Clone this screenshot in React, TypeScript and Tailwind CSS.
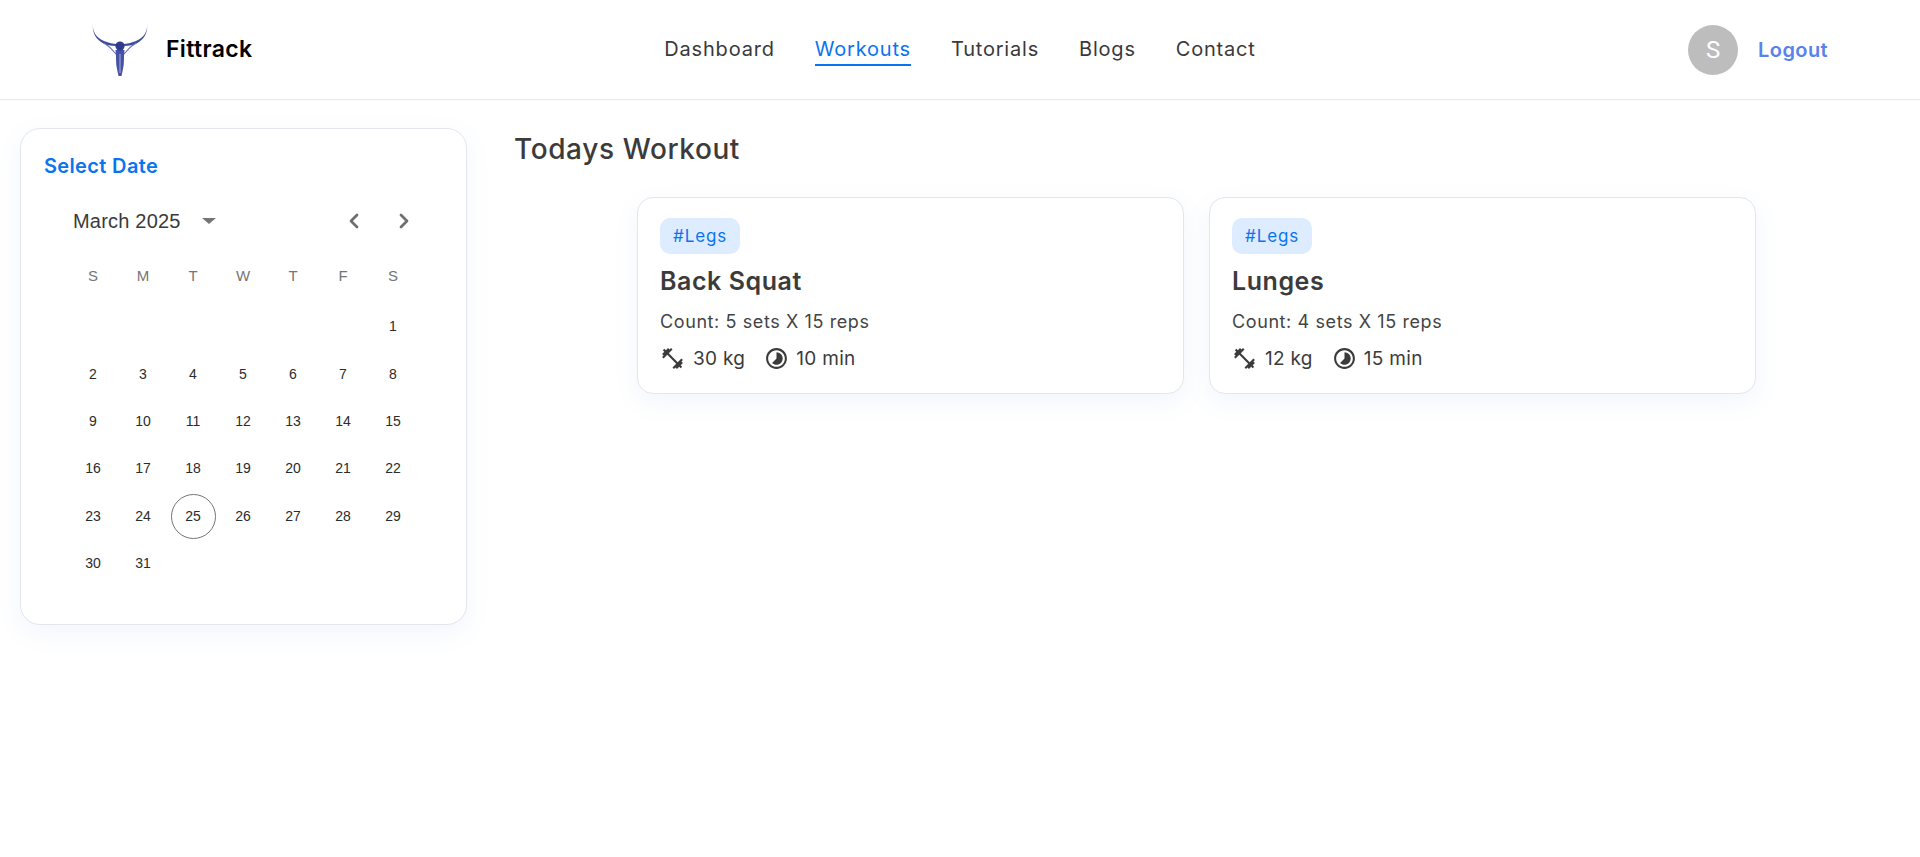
import { ChevronLeft, ChevronRight } from 'lucide-react';
import { MdFitnessCenter, MdTimelapse } from 'react-icons/md';

const navItems = ['Dashboard', 'Workouts', 'Tutorials', 'Blogs', 'Contact'];
const weekDays = ['S', 'M', 'T', 'W', 'T', 'F', 'S'];
const days: (number | null)[] = [...Array(6).fill(null), ...Array.from({ length: 31 }, (_, i) => i + 1)];

const workouts = [
  { name: 'Back Squat', count: 'Count: 5 sets X 15 reps', weight: '30 kg', time: '10 min' },
  { name: 'Lunges', count: 'Count: 4 sets X 15 reps', weight: '12 kg', time: '15 min' },
];

const Logo = () => (
  <svg viewBox="0 0 56 54" className="h-[54px] w-[56px]" aria-hidden>
    <path d="M1 1C0 9 5 15 12 18C17 20 21 21 25 21L25 23C19 23 13 22 9 19C3 15 0 8 1 1Z" fill="#3c4a9e" />
    <path d="M55 1C56 9 51 15 44 18C39 20 35 21 31 21L31 23C37 23 43 22 47 19C53 15 56 8 55 1Z" fill="#3c4a9e" />
    <g fill="none" stroke="#6470b8" strokeLinecap="round">
      <path d="M12 20C17 23 21 27 24 31M44 20C39 23 35 27 32 31" strokeWidth="1.1" />
    </g>
    <path d="M23.5 27C24.5 34 23.5 40 25 46L26.5 53H29.5L31 46C32.5 40 31.5 34 32.5 27Z" fill="#4552a6" />
    <path d="M28 31V50" stroke="#c5cbe8" strokeWidth="0.8" fill="none" />
    <circle cx="28" cy="23" r="4.6" fill="#2f3b8f" />
  </svg>
);

const WorkoutCard = ({ workout }: { workout: (typeof workouts)[number] }) => (
  <article className="h-[197px] w-[547px] rounded-2xl border border-[#e3e6ec] bg-white px-[22px] pt-[20px] shadow-[0_8px_24px_rgba(90,130,220,0.08)]">
    <span className="inline-flex h-9 items-center rounded-[10px] bg-[#deecff] px-[13px] pt-[1px] text-[17px] tracking-[0.9px] text-[#0a74f0]">#Legs</span>
    <h3 className="mt-[8px] text-[25px] font-semibold leading-[38px] tracking-[0.55px] text-[#3b3b3b]">{workout.name}</h3>
    <p className="mt-[9px] text-[18px] leading-[26px] tracking-[0.6px] text-[#444]">{workout.count}</p>
    <div className="mt-[10px] flex items-center text-[19px] leading-[27px] tracking-[0.3px] text-[#3b3b3b]">
      <MdFitnessCenter className="h-[25px] w-[25px]" />
      <span className="ml-[8px]">{workout.weight}</span>
      <MdTimelapse className="ml-[19px] h-[25px] w-[25px]" />
      <span className="ml-[7px]">{workout.time}</span>
    </div>
  </article>
);

export default function App() {
  return (
    <div className="min-h-[857px] bg-white font-['Inter','Noto_Sans',sans-serif]">
      <header className="flex h-[100px] items-center justify-between border-b border-[#e8e8e8] pl-[92px] pr-[92px]">
        <div className="flex w-[300px] items-center gap-[18px]">
          <Logo />
          <span className="text-[23px] font-semibold tracking-[0.35px] text-black">Fittrack</span>
        </div>
        <nav className="mt-[1px] flex items-center gap-[40px] text-[20px] tracking-[0.8px] text-[#3a3a3a]">
          {navItems.map((item) =>
            item === 'Workouts' ? (
              <span key={item} className="border-b-2 border-[#0a74f0] text-[#0a74f0]">
                {item}
              </span>
            ) : (
              <span key={item} className="border-b-2 border-transparent">
                {item}
              </span>
            ),
          )}
        </nav>
        <div className="flex w-[300px] items-center justify-end gap-[20px]">
          <div className="flex h-[50px] w-[50px] items-center justify-center rounded-full bg-[#bdbdbd] font-['Roboto',sans-serif] text-[24px] text-white">
            S
          </div>
          <span className="text-[20px] font-semibold tracking-[0.4px] text-[#5a82ea]">Logout</span>
        </div>
      </header>

      <main className="flex items-start pl-[20px] pt-[28px]">
        <aside className="h-[497px] w-[447px] shrink-0 rounded-[20px] border border-[#e3e6ec] bg-white px-[23px] pt-[23px] shadow-[0_8px_24px_rgba(90,130,220,0.08)]">
          <h2 className="text-[20px] font-semibold leading-[28px] tracking-[0.35px] text-[#0a74f0]">Select Date</h2>
          <div className="font-['Liberation_Sans',sans-serif]">
            <div className="mt-[26px] flex h-[30px] items-center pl-[29px] pr-[27px]">
              <span className="text-[20px] tracking-[0.2px] text-[#3a3a3a]">March 2025</span>
              <span className="ml-[21px] h-0 w-0 border-x-[7px] border-t-[6px] border-x-transparent border-t-[#757575]" />
              <div className="ml-auto flex gap-[26px] text-[#6f6f6f]">
                <ChevronLeft className="h-6 w-6" strokeWidth={2.75} />
                <ChevronRight className="h-6 w-6" strokeWidth={2.75} />
              </div>
            </div>
            <div className="mt-[20px] grid grid-cols-[repeat(7,50px)] pl-[24px]">
              {weekDays.map((d, i) => (
                <div key={i} className="flex h-[40px] items-center justify-center text-[15px] text-[#757575]">
                  {d}
                </div>
              ))}
            </div>
            <div className="mt-[7px] grid grid-cols-[repeat(7,50px)] auto-rows-[47.4px] pl-[24px]">
              {days.map((d, i) => (
                <div key={i} className="flex items-center justify-center text-[14px] text-[#2c2c2c]">
                  {d === 25 ? (
                    <span className="flex h-[45px] w-[45px] items-center justify-center rounded-full border border-[#757575]">{d}</span>
                  ) : (
                    d
                  )}
                </div>
              ))}
            </div>
          </div>
        </aside>

        <section className="ml-[47px] flex-1">
          <h1 className="mt-[1px] text-[28px] font-medium leading-[40px] tracking-[0.6px] text-[#3b3b3b]">Todays Workout</h1>
          <div className="mt-[28px] flex gap-[25px] pl-[123px]">
            {workouts.map((w) => (
              <WorkoutCard key={w.name} workout={w} />
            ))}
          </div>
        </section>
      </main>
    </div>
  );
}
